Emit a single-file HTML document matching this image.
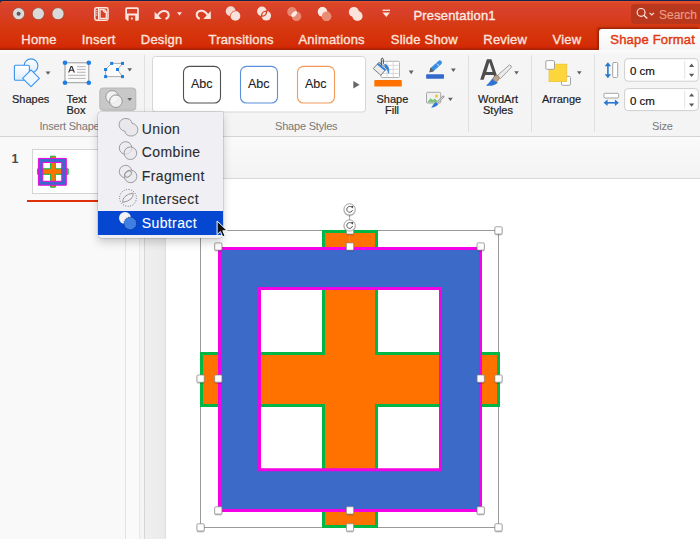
<!DOCTYPE html>
<html><head><meta charset="utf-8">
<style>
*{margin:0;padding:0;box-sizing:border-box}
html,body{width:700px;height:539px;overflow:hidden;background:#fff;font-family:"Liberation Sans",sans-serif}
.a{position:absolute}
.t{position:absolute;white-space:nowrap;line-height:1}
#title{left:0;top:1px;width:700px;height:49px;border-radius:3px 0 0 0;background:linear-gradient(#e34f2a,#da4526 3px,#d8402a 10px,#d6380f 27px,#d52f08 40px,#d32a05 46px,#c12605 47px,#a82206 48px)}
.tab{position:absolute;top:33px;font-size:13px;letter-spacing:0.2px;color:#fbe3dc;-webkit-text-stroke:0.35px currentColor;white-space:nowrap;line-height:1}
#ribbon{left:0;top:50px;width:700px;height:87px;background:linear-gradient(#fbfbfb,#f5f5f5 5px,#f4f4f4);border-bottom:1px solid #d3d3d3}
.lbl{position:absolute;font-size:11px;color:#1e1e1e;-webkit-text-stroke:0.2px currentColor;white-space:nowrap;line-height:1}
.glbl{position:absolute;font-size:11px;color:#787878;letter-spacing:-0.2px;white-space:nowrap;line-height:1}
.sep{position:absolute;top:55px;width:1px;height:77px;background:#e0e0e0}
.dd{position:absolute;width:0;height:0;border-left:2.5px solid transparent;border-right:2.5px solid transparent;border-top:4px solid #555}
.mi{font-size:14px;letter-spacing:0.38px;-webkit-text-stroke:0.1px currentColor}
</style></head><body>
<!-- title bar -->
<div class="a" style="left:0;top:0;width:700px;height:6px;background:#0f2550"></div>
<div id="title" class="a"></div>
<div class="a" style="left:2px;top:1px;width:698px;height:1px;background:#e8542f;opacity:.6"></div>
<svg class="a" style="left:0;top:0" width="700" height="50">
 <!-- traffic lights -->
 <g fill="#dadada" stroke="#a9482c" stroke-width="0.9">
  <circle cx="18.6" cy="13.7" r="6.1"/><circle cx="38.3" cy="13.7" r="6.1"/><circle cx="58" cy="13.7" r="6.1"/>
 </g>
 <circle cx="18.6" cy="13.7" r="2" fill="#5a5a5a"/>
</svg>
<svg class="a" style="left:0;top:0;z-index:2" width="700" height="50">
 <!-- toolbar icons -->
 <rect x="94.8" y="7.8" width="13.2" height="12.4" rx="1.6" fill="none" stroke="#fbe6e0" stroke-width="1.5"/>
 <line x1="98.6" y1="7.8" x2="98.6" y2="20.2" stroke="#fbe6e0" stroke-width="1.3"/>
 <g fill="#fbe6e0"><rect x="95.6" y="10.2" width="1.8" height="1"/><rect x="95.6" y="12.4" width="1.8" height="1"/><rect x="95.6" y="14.6" width="1.8" height="1"/></g>
 <path d="M100 9.6H103.5Q106 9.8 106.3 12.4V18.4H100Z" fill="none" stroke="#fbe6e0" stroke-width="1.3"/>
 <path d="M103.3 9.8Q103.3 12.2 106 12.4" fill="none" stroke="#fbe6e0" stroke-width="1.2"/>
 <!-- save -->
 <path fill-rule="evenodd" fill="#fbe6e0" d="M126.8 7.3H137.3Q138.8 7.3 138.8 8.8V19.3Q138.8 20.8 137.3 20.8H127.3L125.3 18.8V8.8Q125.3 7.3 126.8 7.3Z M127 8.9V13.5H137.1V8.9Z M128.6 15.4V20.8H135.2V15.4Z"/>
 <rect x="131" y="17.6" width="1.8" height="1.8" fill="#fbe6e0"/>
 <!-- undo -->
 <path d="M157.6 15.4Q160.5 10.6 164.5 10.9Q168.6 11.4 168.7 15Q168.7 17.8 165.6 19" fill="none" stroke="#fbe6e0" stroke-width="2"/>
 <path d="M154.6 11.8V18.9H161.7Z" fill="#fbe6e0"/>
 <path d="M177 12.2H182L179.5 15.4Z" fill="#fbe6e0"/>
 <!-- redo -->
 <path d="M207.8 15.2Q204.9 10.4 200.9 10.7Q196.8 11.2 196.7 14.8Q196.7 17.6 199.8 18.9" fill="none" stroke="#fbe6e0" stroke-width="2"/>
 <path d="M210.8 11V18.9H203.4Z" fill="#fbe6e0"/>
 <!-- combine -->
 <circle cx="230.7" cy="11.2" r="4.9" fill="#f6d9d1"/>
 <circle cx="235.4" cy="15.9" r="4.9" fill="#f8e2dc"/>
 <path d="M230.5 15.9A4.9 4.9 0 0 1 235.4 11" fill="none" stroke="#dd5a3c" stroke-width="0.9"/>
 <!-- fragment-ish -->
 <defs><clipPath id="fc1"><circle cx="261.9" cy="11.4" r="5.4"/></clipPath></defs>
 <circle cx="261.9" cy="11.4" r="4.8" fill="#f8e2dc"/>
 <circle cx="266.3" cy="15.8" r="4.8" fill="#f8e2dc"/>
 <circle cx="266.3" cy="15.8" r="5.4" fill="#d8411f" clip-path="url(#fc1)"/>
 <ellipse cx="264.1" cy="13.6" rx="1.1" ry="2.2" transform="rotate(45 264.1 13.6)" fill="#f8e2dc"/>
 <!-- intersect -->
 <circle cx="292" cy="11.8" r="4.8" fill="#e88a73"/>
 <circle cx="296.5" cy="16.3" r="4.8" fill="#e88a73"/>
 <ellipse cx="294.2" cy="14" rx="3.4" ry="2" transform="rotate(-45 294.2 14)" fill="#fde9e3"/>
 <!-- subtract -->
 <circle cx="326.5" cy="16.3" r="4.8" fill="#ea8c75"/>
 <path d="M322.5 7A4.8 4.8 0 0 1 326.3 11.6A4.8 4.8 0 0 0 322.3 16.5A4.8 4.8 0 0 1 322.5 7Z" fill="#fde9e3"/>
 <circle cx="322.5" cy="11.8" r="4.8" fill="#fde9e3"/>
 <circle cx="326.5" cy="16.3" r="4.8" fill="#ea8c75"/>
 <!-- union -->
 <circle cx="353.9" cy="12" r="5.1" fill="#fbe3dc"/>
 <circle cx="357.5" cy="16" r="5.1" fill="#fbe3dc"/>
 <!-- customize -->
 <rect x="382.5" y="9.6" width="7.5" height="1.3" fill="#fbe6e0"/>
 <path d="M382.5 12.5H390L386.25 17Z" fill="#fbe6e0"/>
 <!-- search -->
 <circle cx="641.1" cy="12.4" r="3.9" fill="none" stroke="#fbe6e0" stroke-width="1.2"/>
 <path d="M643.8 15.2L647.3 18.5" stroke="#fbe6e0" stroke-width="1.3"/>
 <path d="M649.6 12.8L651.8 14.9L654 12.8" fill="none" stroke="#fbe6e0" stroke-width="1.1"/>
</svg>
<div class="t" style="left:413.5px;top:8.5px;letter-spacing:0.15px;font-size:13px;color:#fbe9e4;-webkit-text-stroke:0.35px #fbe9e4">Presentation1</div>
<div class="a" style="left:631px;top:4px;width:75px;height:19.5px;background:#b9371c;border-radius:4px"></div>
<div class="t" style="left:659px;top:8.5px;font-size:12px;color:#e89c89;-webkit-text-stroke:0.15px #e89c89">Search</div>

<div class="tab" style="left:21.3px">Home</div>
<div class="tab" style="left:81.8px">Insert</div>
<div class="tab" style="left:140.8px">Design</div>
<div class="tab" style="left:208.5px">Transitions</div>
<div class="tab" style="left:298.5px">Animations</div>
<div class="tab" style="left:390.8px">Slide Show</div>
<div class="tab" style="left:483.3px">Review</div>
<div class="tab" style="left:552.5px">View</div>
<div class="a" style="left:599px;top:28.5px;width:101px;height:22px;background:linear-gradient(#fff,#f5f5f5);border-radius:3px 0 0 0;box-shadow:-1px -1px 0 #9c250a,-2px -2px 1.5px rgba(130,25,5,.45)"></div>
<div class="tab" style="left:610.3px;color:#e23a12;-webkit-text-stroke:0.45px #e23a12">Shape Format</div>

<!-- ribbon -->
<div id="ribbon" class="a"></div>


<!-- ribbon content -->
<svg class="a" style="left:0;top:50px" width="700" height="87">
 <g transform="translate(0,-50)">
 <!-- Shapes icon -->
 <defs><linearGradient id="bg1" x1="0" y1="0" x2="0" y2="1"><stop offset="0" stop-color="#ffffff"/><stop offset="1" stop-color="#dcecfb"/></linearGradient></defs>
 <circle cx="31" cy="65.8" r="6.9" fill="url(#bg1)" stroke="#3b94ec" stroke-width="1.1"/>
 <rect x="14.4" y="65.3" width="15" height="15" rx="1" fill="url(#bg1)" stroke="#3b94ec" stroke-width="1.1"/>
 <path d="M31 69.9L39.4 78.3L31 86.7L22.6 78.3Z" fill="#eef6fe" stroke="#3b94ec" stroke-width="1.1" stroke-linejoin="round"/>
 <!-- text box icon -->
 <rect x="65" y="62.8" width="23.8" height="19.9" fill="#fafafa" stroke="#9a9a9a" stroke-width="1"/>
 <path d="M68.1 72.6L70.7 66.1H72.3L74.9 72.6H73.7L73 70.8H70L69.3 72.6Z M70.4 69.8H72.6L71.5 67Z" fill="#2a2a2a"/>
 <g stroke="#a5a5a5" stroke-width="0.8"><line x1="77" y1="66.6" x2="85.6" y2="66.6"/><line x1="77" y1="69.4" x2="85.6" y2="69.4"/><line x1="77" y1="72.3" x2="85.6" y2="72.3"/><line x1="68.1" y1="75.3" x2="85.6" y2="75.3"/><line x1="68.1" y1="78.4" x2="85.6" y2="78.4"/></g>
 <g fill="#1d7ee6"><circle cx="65" cy="62.8" r="2.3"/><circle cx="88.8" cy="62.8" r="2.3"/><circle cx="65" cy="82.7" r="2.3"/><circle cx="88.8" cy="82.7" r="2.3"/></g>
 <!-- edit shape icon -->
 <path d="M111.7 63.4H122.5L117.5 69.5L122.5 76.6H105.6V69.5Z" fill="#fbfbfb" stroke="#a0a0a0" stroke-width="0.9"/>
 <g fill="#1d7ee0"><rect x="110.2" y="61.9" width="3" height="3"/><rect x="121" y="61.9" width="3" height="3"/><rect x="104.1" y="68" width="3" height="3"/><rect x="116" y="68" width="3" height="3"/><rect x="104.1" y="75.1" width="3" height="3"/><rect x="121" y="75.1" width="3" height="3"/></g>
 <!-- merge button -->
 <rect x="99.8" y="88" width="36" height="22.3" rx="3" fill="#c8c8c8" stroke="#b4b4b4" stroke-width="0.9"/>
 <circle cx="112.1" cy="96.9" r="6.3" fill="#f2f2f2" stroke="#8e8e8e" stroke-width="0.9"/>
 <circle cx="115.9" cy="101.2" r="6.3" fill="#f6f6f6" fill-opacity="0.85" stroke="#8e8e8e" stroke-width="0.9"/>
 <path d="M109.7 101.2A6.3 6.3 0 0 1 117 95" fill="none" stroke="#b0b0b0" stroke-width="0.8"/>
 <!-- dropdown arrows -->
 <g fill="#606060">
  <path d="M45.5 71.5H50.5L48 74.8Z"/>
  <path d="M127.4 68.3H132L129.7 71.5Z"/>
  <path d="M127.4 98H132L129.7 101Z"/>
  <path d="M408.8 70.6H413.6L411.2 74.2Z"/>
  <path d="M451 68.6H455.8L453.4 72Z"/>
  <path d="M448 97.7H452.8L450.4 101Z"/>
  <path d="M514.2 71.2H518.8L516.5 74.6Z"/>
  <path d="M577 71.2H581.6L579.3 74.6Z"/>
 </g>
 <!-- gallery -->
 <rect x="152.5" y="56.5" width="213" height="55.5" rx="3" fill="#fff" stroke="#d6d6d6" stroke-width="1"/>
 <rect x="183.5" y="66.4" width="37" height="36.6" rx="6" fill="#fff" stroke="#505050" stroke-width="1.1"/>
 <rect x="240.5" y="66.4" width="37" height="36.6" rx="6" fill="#fff" stroke="#5b8fdb" stroke-width="1.1"/>
 <rect x="297.5" y="66.4" width="37" height="36.6" rx="6" fill="#fff" stroke="#f29a5a" stroke-width="1.1"/>
 <path d="M353.3 81V88.6L359.6 84.8Z" fill="#666"/>
 <!-- shape fill -->
 <g>
  <rect x="381" y="61.3" width="18.5" height="16.2" rx="1.2" fill="#fff" stroke="#a8a8a8" stroke-width="0.9"/>
  <g stroke="#cfcfcf" stroke-width="0.8"><line x1="381" y1="65.3" x2="399.5" y2="65.3"/><line x1="381" y1="69.4" x2="399.5" y2="69.4"/><line x1="381" y1="73.4" x2="399.5" y2="73.4"/><line x1="387" y1="61.3" x2="387" y2="77.5"/><line x1="393.2" y1="61.3" x2="393.2" y2="77.5"/></g>
  <path d="M373.3 68.6L378.9 62.3L386.7 68.4L380.8 75.3Z" fill="#ececec" stroke="#6e6e6e" stroke-width="0.9"/>
  <path d="M377.6 63.8L385.6 70.2" stroke="#2f7fd6" stroke-width="2"/>
  <path d="M381.3 65.6V59.5Q381.3 58.2 382.3 58.2Q383.3 58.2 383.3 59.5V64.2" stroke="#3a3a3a" stroke-width="0.9" fill="none"/>
  <path d="M384.6 64.2Q389.8 65.5 388.6 73.3Q388 69 385.4 66.9Z" fill="#2f7fd6" stroke="#2f7fd6" stroke-width="0.8"/>
  <rect x="374.3" y="80.1" width="27.5" height="6.4" rx="0.8" fill="#ff7200"/>
 </g>
 <!-- pen -->
 <rect x="426.1" y="74.2" width="17.9" height="4.5" rx="0.8" fill="#3569c9"/>
 <path d="M432.3 69.3L439.8 62.6" stroke="#3a8fe4" stroke-width="4.3" stroke-linecap="round"/>
 <path d="M436.9 63.6L439.3 66.2" stroke="#f4f4f4" stroke-width="0.9"/>
 <path d="M429.2 72.5L430.4 67.6L433.9 71.2Z" fill="#606060"/>
 <!-- picture brush -->
 <rect x="426.5" y="92.3" width="14.2" height="10.8" rx="1" fill="#f0f0f0" stroke="#a0a0a0" stroke-width="0.9"/>
 <path d="M427.2 102.6L430.5 98.2L433 100L435 98.6L438.5 102.6Z" fill="#7cc47c"/>
 <circle cx="436.5" cy="96.1" r="1.5" fill="#f6c32c"/>
 <path d="M443.4 96.6L436.4 103.2" stroke="#9a9a9a" stroke-width="2.2" stroke-linecap="round"/>
 <path d="M443.2 96.9L436.6 103" stroke="#e8e8e8" stroke-width="0.9"/>
 <path d="M435.8 102.3Q432.8 104 431.2 107.7Q436.5 107.3 438.2 104.3Z" fill="#2f78d6"/>
 <!-- wordart -->
 <path fill-rule="evenodd" d="M480.2 79.8L486.9 59.3H491.4L497.6 77.5L495 79.8L493.6 75H485.3L483.6 79.8Z M486.3 72H492.6L489.3 62.3Z" fill="#4d4d4d"/>
 <path d="M509.4 64.9Q511.9 65.4 511.2 67.6L500.2 78.8L497 75.9Z" fill="#ececec" stroke="#8c8c8c" stroke-width="0.8"/>
 <ellipse cx="496" cy="78.6" rx="3.6" ry="2.8" transform="rotate(-45 496 78.6)" fill="#bba48d" stroke="#8a6e55" stroke-width="0.6"/>
 <path d="M492.4 78.4Q489 83.2 486 85.6Q494 86.6 497.9 82.4Q494.5 81.8 492.4 78.4Z" fill="#2e74d2"/>
 <!-- arrange -->
 <rect x="561.5" y="76.3" width="9" height="9" rx="1.3" fill="#fff" stroke="#9a9a9a" stroke-width="0.9"/>
 <rect x="549" y="64.1" width="17.8" height="17.6" fill="#fdd63c" stroke="#e9bb2c" stroke-width="0.6"/>
 <rect x="545.8" y="60.6" width="8.7" height="8.7" rx="1.3" fill="#fff" stroke="#9a9a9a" stroke-width="0.9"/>
 <!-- size icons -->
 <rect x="612.7" y="62.5" width="5" height="15" rx="1.2" fill="#fff" stroke="#9a9a9a" stroke-width="0.9"/>
 <path d="M607.9 64.5V76" stroke="#2a78d0" stroke-width="1.6"/>
 <path d="M604.7 66.2L607.9 62.2L611.1 66.2Z M604.7 74.3L607.9 78.3L611.1 74.3Z" fill="#2a78d0"/>
 <rect x="603.9" y="93.3" width="14.8" height="4.7" rx="1.2" fill="#fff" stroke="#9a9a9a" stroke-width="0.9"/>
 <path d="M606 102.8H616.5" stroke="#2a78d0" stroke-width="1.6"/>
 <path d="M607.6 99.6L603.6 102.8L607.6 106Z M614.9 99.6L618.9 102.8L614.9 106Z" fill="#2a78d0"/>
 <!-- inputs -->
 <rect x="624.6" y="58.7" width="73.7" height="22.5" rx="3.5" fill="#fff" stroke="#c9c9c9" stroke-width="0.9"/>
 <rect x="624.6" y="88.6" width="73.7" height="22" rx="3.5" fill="#fff" stroke="#c9c9c9" stroke-width="0.9"/>
 <line x1="684.7" y1="61" x2="684.7" y2="79" stroke="#e4e4e4"/>
 <line x1="684.7" y1="91" x2="684.7" y2="108.5" stroke="#e4e4e4"/>
 <g fill="#5a5a5a">
  <path d="M689 66.9H694.2L691.6 63.6Z"/><path d="M689 73.7H694.2L691.6 77Z"/>
  <path d="M689 96.6H694.2L691.6 93.3Z"/><path d="M689 103.4H694.2L691.6 106.7Z"/>
 </g>
 </g>
</svg>
<div class="sep" style="left:144px"></div>
<div class="sep" style="left:468px"></div>
<div class="sep" style="left:531px"></div>
<div class="sep" style="left:594px"></div>
<div class="lbl" style="left:12px;top:93.5px">Shapes</div>
<div class="lbl" style="left:66.5px;top:93.5px">Text</div>
<div class="lbl" style="left:66.5px;top:105.3px">Box</div>
<div class="glbl" style="left:39.5px;top:121px">Insert Shapes</div>
<div class="t" style="left:191px;top:78px;font-size:12.5px;color:#222;-webkit-text-stroke:0.1px #222">Abc</div>
<div class="t" style="left:248px;top:78px;font-size:12.5px;color:#222;-webkit-text-stroke:0.1px #222">Abc</div>
<div class="t" style="left:305px;top:78px;font-size:12.5px;color:#222;-webkit-text-stroke:0.1px #222">Abc</div>
<div class="glbl" style="left:275px;top:121px">Shape Styles</div>
<div class="lbl" style="left:376.5px;top:93.5px">Shape</div>
<div class="lbl" style="left:385px;top:105.3px">Fill</div>
<div class="lbl" style="left:478px;top:93.5px">WordArt</div>
<div class="lbl" style="left:483px;top:105.3px">Styles</div>
<div class="lbl" style="left:542px;top:93.5px">Arrange</div>
<div class="glbl" style="left:652px;top:121px">Size</div>
<div class="t" style="left:630px;top:66px;font-size:11.5px;color:#111;-webkit-text-stroke:0.2px #111">0 cm</div>
<div class="t" style="left:630px;top:96px;font-size:11.5px;color:#111;-webkit-text-stroke:0.2px #111">0 cm</div>

<!-- left pane -->
<div class="a" style="left:0;top:137px;width:126px;height:402px;background:#f9f9f9"></div>

<!-- slide area -->
<div class="a" style="left:126px;top:137px;width:13px;height:402px;background:#fafafa"></div>
<div class="a" style="left:140px;top:137px;width:4px;height:402px;background:#f4f4f4"></div>
<div class="a" style="left:145px;top:137px;width:555px;height:402px;background:#ededed"></div>
<div class="a" style="left:166px;top:179px;width:534px;height:360px;background:#fff"></div>



<!-- pane lines -->
<div class="a" style="left:125px;top:137px;width:1px;height:402px;background:#e2e2e2"></div>
<div class="a" style="left:139px;top:137px;width:1px;height:402px;background:#e9e9e9"></div>
<div class="a" style="left:144px;top:137px;width:1px;height:402px;background:#d6d6d6"></div>
<div class="a" style="left:145px;top:137px;width:555px;height:42px;background:linear-gradient(#fafafa,#f3f3f3);border-bottom:1px solid #d9d9d9"></div>
<div class="a" style="left:145px;top:179px;width:21px;height:360px;background:linear-gradient(90deg,#efefef,#ebebeb 90%,#dedede)"></div>
<div class="t" style="left:11.5px;top:153px;font-size:12.5px;font-weight:bold;color:#4a4a4a">1</div>
<div class="a" style="left:31.5px;top:149px;width:91px;height:45px;background:#fff;border:1px solid #d4d4d4"></div>
<div class="a" style="left:27px;top:200px;width:95px;height:2px;background:#de300a"></div>
<svg class="a" style="left:0;top:0" width="140" height="200">
 <path d="M50.6 156.2H55.3V168.8H68.2V174.3H55.3V187.2H50.6V174.3H37.6V168.8H50.6Z" fill="#ff7200" stroke="#00b745" stroke-width="1"/>
 <path fill-rule="evenodd" d="M38.4 158.4H66.3V185.2H38.4Z M42.8 162.5V181.3H61.8V162.5Z" fill="#3c6ac8" stroke="#f202e4" stroke-width="1"/>
</svg>

<!-- slide content -->
<svg class="a" style="left:0;top:0" width="700" height="539">
 <!-- selection outer -->
 <rect x="200.5" y="230.5" width="298" height="297" fill="none" stroke="#9a9a9a" stroke-width="1"/>
 <!-- cross -->
 <path d="M323.5 231.5H376.5V353.5H498.5V405.5H376.5V526.5H323.5V405.5H201.5V353.5H323.5Z" fill="#ff7200" stroke="#00b745" stroke-width="3"/>
 <!-- frame -->
 <path fill-rule="evenodd" d="M219.5 248.5H480.5V510.5H219.5Z M259.5 288.5V469.8H440.5V288.5Z" fill="#3c6ac8" stroke="#f202e4" stroke-width="3"/>
 <line x1="349.6" y1="209" x2="349.6" y2="246" stroke="#a0a0a0" stroke-width="0.9"/>
 <defs><filter id="hs" x="-50%" y="-50%" width="200%" height="200%"><feDropShadow dx="0" dy="0.6" stdDeviation="0.6" flood-color="#000" flood-opacity="0.45"/></filter></defs>
 <g fill="#fff" stroke="#8a8a8a" stroke-width="0.7" filter="url(#hs)">
  <rect x="197.0" y="226.8" width="7.2" height="7.2" rx="1"/>
  <rect x="494.9" y="226.8" width="7.2" height="7.2" rx="1"/>
  <rect x="197.0" y="523.8" width="7.2" height="7.2" rx="1"/>
  <rect x="494.9" y="523.8" width="7.2" height="7.2" rx="1"/>
  <rect x="197.0" y="375.0" width="7.2" height="7.2" rx="1"/>
  <rect x="494.9" y="375.0" width="7.2" height="7.2" rx="1"/>
  <rect x="346.4" y="523.8" width="7.2" height="7.2" rx="1"/>
  <rect x="346.4" y="226.8" width="7.2" height="7.2" rx="1"/>
  <rect x="214.7" y="242.9" width="7.2" height="7.2" rx="1"/>
  <rect x="477.1" y="242.9" width="7.2" height="7.2" rx="1"/>
  <rect x="214.7" y="506.8" width="7.2" height="7.2" rx="1"/>
  <rect x="477.1" y="506.8" width="7.2" height="7.2" rx="1"/>
  <rect x="214.7" y="375.0" width="7.2" height="7.2" rx="1"/>
  <rect x="477.1" y="375.0" width="7.2" height="7.2" rx="1"/>
  <rect x="346.4" y="506.8" width="7.2" height="7.2" rx="1"/>
  <rect x="346.4" y="242.9" width="7.2" height="7.2" rx="1"/>
  <circle cx="349.6" cy="209.4" r="5.6"/>
  <circle cx="349.6" cy="225.5" r="5.6"/>
 </g>
 <path d="M351.6 207.2A2.9 2.9 0 1 0 352.5 210.0" fill="none" stroke="#4a4a4a" stroke-width="0.9"/>
 <path d="M350.6 206.2L353.3 205.8L352.9 208.6Z" fill="#4a4a4a"/>
 <path d="M351.6 223.3A2.9 2.9 0 1 0 352.5 226.1" fill="none" stroke="#4a4a4a" stroke-width="0.9"/>
 <path d="M350.6 222.3L353.3 221.9L352.9 224.7Z" fill="#4a4a4a"/>
</svg>

<!-- merge menu -->
<div class="a" style="left:98px;top:111.8px;width:124.6px;height:126px;background:#efeff4;border-radius:3px 0 4px 4px;box-shadow:0 0 0 0.5px rgba(0,0,0,0.2),0 4px 10px rgba(0,0,0,0.2)"></div>
<div class="a" style="left:98px;top:210.8px;width:124.6px;height:24px;background:#0547d0"></div>
<div class="t mi" style="left:141.8px;top:121.8px;color:#2b2b2b">Union</div>
<div class="t mi" style="left:141.8px;top:145.3px;color:#2b2b2b">Combine</div>
<div class="t mi" style="left:141.8px;top:169px;color:#2b2b2b">Fragment</div>
<div class="t mi" style="left:141.8px;top:192px;color:#2b2b2b">Intersect</div>
<div class="t mi" style="left:141.8px;top:216.2px;color:#fff">Subtract</div>
<svg class="a" style="left:0;top:0" width="240" height="240">
 <!-- union -->
 <g fill="#e9e9ed" stroke="#949494" stroke-width="0.9">
  <path transform="translate(0.8 0.3)" d="M125.2 118.2A6.3 6.3 0 0 1 131.3 123.1A6.3 6.3 0 0 1 130.1 135.7A6.3 6.3 0 0 1 124 130.8A6.3 6.3 0 0 1 125.2 118.2Z"/>
 </g>
 <!-- combine -->
 <circle cx="125.6" cy="148" r="6.3" fill="#ededf1" stroke="#949494" stroke-width="0.9"/>
 <circle cx="130.4" cy="153.2" r="6.3" fill="#e8e8ec" fill-opacity="0.7" stroke="#949494" stroke-width="0.9"/>
 <!-- fragment -->
 <circle cx="125.6" cy="171.6" r="6.3" fill="#ededf1" stroke="#949494" stroke-width="0.9"/>
 <circle cx="130.6" cy="176.4" r="6.3" fill="#e8e8ec" fill-opacity="0.7" stroke="#949494" stroke-width="0.9"/>
 <ellipse cx="128.1" cy="174" rx="3.8" ry="2.6" transform="rotate(-40 128.1 174)" fill="none" stroke="#949494" stroke-width="0.9"/>
 <!-- intersect -->
 <circle cx="128" cy="197.9" r="8.4" fill="none" stroke="#555" stroke-width="1" stroke-dasharray="0.8 1.7"/>
 <path d="M122.6 202.4Q122.3 195 133.2 193Q133.8 200.4 122.6 202.4Z" fill="none" stroke="#8a8a8a" stroke-width="0.85"/>
 <!-- subtract -->
 <circle cx="125" cy="218" r="6" fill="#f4f4f6"/>
 <circle cx="130.2" cy="223.4" r="6.3" fill="#3f7fe3" stroke="#0d2050" stroke-width="0.8" stroke-dasharray="0.9 1"/>
 <!-- cursor -->
 <path d="M217.1 221V234.6L220.4 231.5L222.7 236.8L225 235.8L222.8 230.7H227.2Z" fill="#111" stroke="#fff" stroke-width="1"/>
</svg>
</body></html>
